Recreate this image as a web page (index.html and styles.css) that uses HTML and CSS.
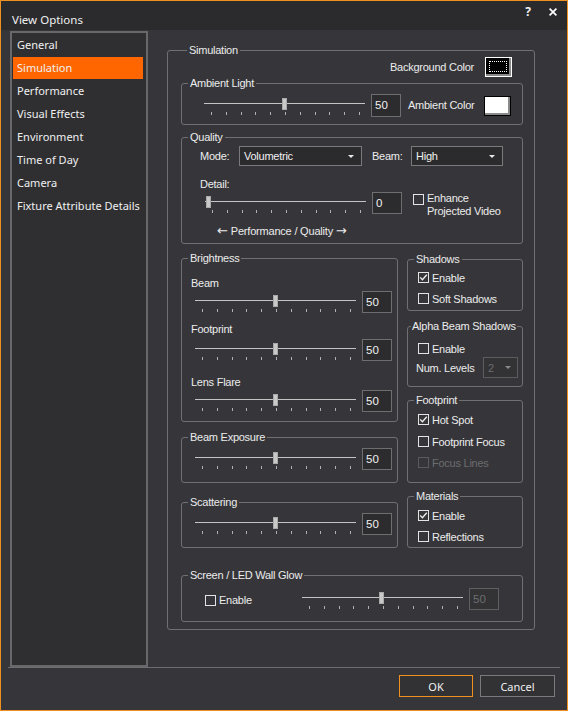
FILE: index.html
```html
<!DOCTYPE html>
<html lang="en">
<head>
<meta charset="utf-8">
<title>View Options</title>
<link rel="stylesheet" href="styles.css">
</head>
<body>
<div class="window">
  <header class="titlebar">
    <span class="title">View Options</span>
    <span class="help">?</span>
    <svg class="close" width="8" height="8" viewBox="0 0 8 8"><path d="M0.6 0.6 7.4 7.4 M7.4 0.6 0.6 7.4" stroke="#ffffff" stroke-width="1.7" fill="none"/></svg>
  </header>
  <div class="content">
    <ul class="nav">
      <li>General</li>
      <li class="active">Simulation</li>
      <li>Performance</li>
      <li>Visual Effects</li>
      <li>Environment</li>
      <li>Time of Day</li>
      <li>Camera</li>
      <li>Fixture Attribute Details</li>
    </ul>
    <main class="main">
      <fieldset class="grp sim">
        <legend>Simulation</legend>
        <div class="bg-row"><span class="lbl">Background Color</span><span class="swatch swatch-black"><span class="focus"></span></span></div>

        <fieldset class="grp ambient">
          <legend>Ambient Light</legend>
          <div class="amb-row">
            <div class="slider"><div class="track"></div><div class="thumb" style="left:78px"></div><div class="ticks"><i></i><i></i><i></i><i></i><i></i><i></i><i></i><i></i><i></i><i></i><i></i></div></div>
            <div class="val val-tall">50</div>
            <span class="amb-lbl">Ambient Color</span>
            <span class="swatch swatch-white"></span>
          </div>
        </fieldset>

        <fieldset class="grp quality">
          <legend>Quality</legend>
          <div class="q-row1">
            <span class="q-lbl">Mode:</span>
            <div class="dd dd-mode"><span>Volumetric</span><i class="caret"></i></div>
            <span class="q-lbl q-lbl2">Beam:</span>
            <div class="dd dd-beam"><span>High</span><i class="caret"></i></div>
          </div>
          <div class="q-detail">Detail:</div>
          <div class="q-row3">
            <div class="slider"><div class="track"></div><div class="thumb" style="left:1px"></div><div class="ticks"><i></i><i></i><i></i><i></i><i></i><i></i><i></i><i></i><i></i><i></i><i></i></div></div>
            <div class="val">0</div>
            <div class="enh"><span class="cb"></span><span class="enh-lbl">Enhance<br>Projected Video</span></div>
          </div>
          <div class="q-perf"><span class="arr">←</span> Performance / Quality <span class="arr">→</span></div>
        </fieldset>

        <div class="cols">
          <div class="col-left">
            <fieldset class="grp bright">
              <legend>Brightness</legend>
              <div class="b-lbl b-lbl1">Beam</div>
              <div class="srow srow1">
                <div class="slider"><div class="track"></div><div class="thumb" style="left:78px"></div><div class="ticks"><i></i><i></i><i></i><i></i><i></i><i></i><i></i><i></i><i></i><i></i><i></i></div></div>
                <div class="val">50</div>
              </div>
              <div class="b-lbl b-lbl2">Footprint</div>
              <div class="srow srow2">
                <div class="slider"><div class="track"></div><div class="thumb" style="left:78px"></div><div class="ticks"><i></i><i></i><i></i><i></i><i></i><i></i><i></i><i></i><i></i><i></i><i></i></div></div>
                <div class="val">50</div>
              </div>
              <div class="b-lbl b-lbl3">Lens Flare</div>
              <div class="srow srow1">
                <div class="slider"><div class="track"></div><div class="thumb" style="left:78px"></div><div class="ticks"><i></i><i></i><i></i><i></i><i></i><i></i><i></i><i></i><i></i><i></i><i></i></div></div>
                <div class="val">50</div>
              </div>
            </fieldset>

            <fieldset class="grp single exposure">
              <legend>Beam Exposure</legend>
              <div class="srow">
                <div class="slider"><div class="track"></div><div class="thumb" style="left:78px"></div><div class="ticks"><i></i><i></i><i></i><i></i><i></i><i></i><i></i><i></i><i></i><i></i><i></i></div></div>
                <div class="val">50</div>
              </div>
            </fieldset>

            <fieldset class="grp single scatter">
              <legend>Scattering</legend>
              <div class="srow">
                <div class="slider"><div class="track"></div><div class="thumb" style="left:78px"></div><div class="ticks"><i></i><i></i><i></i><i></i><i></i><i></i><i></i><i></i><i></i><i></i><i></i></div></div>
                <div class="val">50</div>
              </div>
            </fieldset>
          </div>

          <div class="col-right">
            <fieldset class="grp rg shadows">
              <legend>Shadows</legend>
              <div class="chk c1"><span class="cb on"><svg width="9" height="9" viewBox="0 0 9 9"><path d="M1.2 4.4 3.4 6.7 7.8 1.8" stroke="#f0f0f0" stroke-width="1.3" fill="none"/></svg></span><span>Enable</span></div>
              <div class="chk c2"><span class="cb"></span><span>Soft Shadows</span></div>
            </fieldset>

            <fieldset class="grp rg alpha">
              <legend>Alpha Beam Shadows</legend>
              <div class="chk a1"><span class="cb"></span><span>Enable</span></div>
              <div class="levels">
                <span>Num. Levels</span>
                <div class="dd dd-lv"><span>2</span><i class="caret"></i></div>
              </div>
            </fieldset>

            <fieldset class="grp rg fprint">
              <legend>Footprint</legend>
              <div class="chk f1"><span class="cb on"><svg width="9" height="9" viewBox="0 0 9 9"><path d="M1.2 4.4 3.4 6.7 7.8 1.8" stroke="#f0f0f0" stroke-width="1.3" fill="none"/></svg></span><span>Hot Spot</span></div>
              <div class="chk f2"><span class="cb"></span><span>Footprint Focus</span></div>
              <div class="chk f3 disabled"><span class="cb"></span><span>Focus Lines</span></div>
            </fieldset>

            <fieldset class="grp rg materials">
              <legend>Materials</legend>
              <div class="chk m1"><span class="cb on"><svg width="9" height="9" viewBox="0 0 9 9"><path d="M1.2 4.4 3.4 6.7 7.8 1.8" stroke="#f0f0f0" stroke-width="1.3" fill="none"/></svg></span><span>Enable</span></div>
              <div class="chk m2"><span class="cb"></span><span>Reflections</span></div>
            </fieldset>
          </div>
        </div>

        <fieldset class="grp led">
          <legend>Screen / LED Wall Glow</legend>
          <div class="led-row">
            <div class="chk led-chk"><span class="cb"></span><span>Enable</span></div>
            <div class="slider"><div class="track"></div><div class="thumb" style="left:77px"></div><div class="ticks"><i></i><i></i><i></i><i></i><i></i><i></i><i></i><i></i><i></i><i></i><i></i></div></div>
            <div class="val val-off">50</div>
          </div>
        </fieldset>
      </fieldset>
    </main>
  </div>
  <footer class="footer">
    <div class="btn primary">OK</div>
    <div class="btn btn-cancel">Cancel</div>
  </footer>
</div>
</body>
</html>
```

FILE: styles.css
```css
* { box-sizing: border-box; }
html, body { margin: 0; padding: 0; }
body { background: #36363a; }

.window {
  width: 568px;
  height: 711px;
  border: 1px solid #f0901e;
  background: #36363a;
  display: flex;
  flex-direction: column;
  font-family: "Noto Sans", "DejaVu Sans", sans-serif;
  color: #f0f0f0;
  overflow: hidden;
}

/* title bar */
.titlebar {
  height: 29px;
  flex: none;
  background: #2b2b2e;
  display: flex;
  align-items: flex-start;
}
.title { margin: 11px 0 0 11px; font-size: 11.5px; line-height: 16px; }
.help { margin: 5px 0 0 auto; font-size: 12px; font-weight: 700; line-height: 12px; }
.close { margin: 7px 10px 0 18px; display: block; flex: none; }

/* content */
.content { height: 637px; flex: none; display: flex; align-items: flex-start; }

.nav {
  list-style: none;
  margin: 1px 0 0 9px;
  padding: 1px 3px 0 1px;
  width: 138px;
  height: 636px;
  border: 2px solid #68686b;
  background: #2f2f31;
  font-size: 11px;
  flex: none;
}
.nav li { height: 22px; margin-bottom: 1px; padding-left: 4px; line-height: 22px; white-space: nowrap; }
.nav li.active { background: #ff6600; }

.main {
  margin: 13px 0 0 19px;
  font-family: "Liberation Sans", Arial, sans-serif;
  font-size: 11px;
  letter-spacing: -0.25px;
  color: #ececec;
}

/* group boxes */
.grp { margin: 0; padding: 0; border: 1px solid #707073; border-radius: 3px; min-width: 0; }
.grp > legend { margin-left: 6px; padding: 0 2px; height: 14px; line-height: 14px; white-space: nowrap; }

.sim { width: 368px; padding: 0 11px 7px 13px; }

.bg-row { height: 19px; display: flex; justify-content: flex-end; align-items: flex-start; gap: 11px; padding-right: 11px; }
.bg-row .lbl { line-height: 20px; }

.swatch { width: 27px; height: 20px; flex: none; display: block; }
.swatch-black { border: 1px solid #ffffff; background: #000; box-shadow: inset -2px -2px 0 #8a8a8a; padding: 3px 4px 4px 3px; }
.swatch-black .focus { display: block; height: 100%; border: 1px dotted #ffffff; }
.swatch-white { border: 1px solid #000; background: #fff; box-shadow: inset -2px -2px 0 #8a8a8a; margin: 2px 0 0 auto; }

/* slider */
.slider { position: relative; width: 161px; flex: none; padding-top: 9px; }
.track { height: 1px; background: #c4c4c4; }
.thumb { position: absolute; top: 4px; width: 5px; height: 12px; background: #c9c9c9; border: 1px solid #a9a9a9; }
.ticks { display: flex; justify-content: space-between; margin: 8px 5px 0 7px; height: 3px; }
.ticks i { width: 1px; height: 3px; background: #b0b0b0; }

.val {
  width: 30px; height: 22px; flex: none;
  border: 1px solid #6e6e70;
  background: #2c2c2e;
  padding-left: 3px;
  line-height: 20px;
  font-size: 11.5px;
  letter-spacing: 0;
  color: #f0f0f0;
}
.val-tall { height: 23px; line-height: 21px; }
.val-off { color: #6e6e70; border-color: #5e5e60; background: #333336; }

/* ambient */
.amb-row { display: flex; align-items: flex-start; padding: 4px 11px 7px 22px; }
.amb-row .val { margin-left: 6px; }
.amb-lbl { margin-left: 7px; line-height: 22px; }

/* quality */
.quality { margin-top: 5px; padding-bottom: 5px; }
.q-row1 { display: flex; align-items: center; padding: 2px 0 0 18px; height: 22px; }
.q-lbl { width: 39px; flex: none; }
.q-lbl2 { margin-left: 10px; }
.dd {
  height: 20px; flex: none;
  border: 1px solid #7a7a7c;
  background: #2b2b2d;
  display: flex; align-items: center;
  padding-left: 4px;
  color: #f0f0f0;
}
.caret { margin-left: auto; margin-right: 7px; width: 0; height: 0; border-left: 3px solid transparent; border-right: 3px solid transparent; border-top: 3px solid #e8e8e8; }
.dd-mode { width: 123px; }
.dd-beam { width: 92px; }
.q-detail { margin-top: 11px; padding-left: 18px; line-height: 14px; }
.q-row3 { display: flex; align-items: flex-start; margin-top: 1px; padding-left: 23px; }
.q-row3 .val { margin-left: 6px; }
.enh { display: flex; align-items: flex-start; margin-left: 11px; }
.enh .cb { margin-top: 2px; }
.enh-lbl { margin-left: 3px; line-height: 13px; }
.q-perf { margin-top: 6px; padding-left: 35px; height: 14px; line-height: 14px; letter-spacing: -0.2px; }
.arr { font-family: "DejaVu Sans", sans-serif; font-size: 13px; line-height: 0; letter-spacing: 0; }

/* checkbox */
.cb { width: 11px; height: 11px; flex: none; border: 1px solid #e4e4e4; display: flex; align-items: center; justify-content: center; }
.cb svg { display: block; }
.chk { display: flex; align-items: center; gap: 3px; height: 15px; }
.chk.disabled { color: #6c6c6e; }
.chk.disabled .cb { border-color: #5a5a5c; }

/* columns */
.cols { display: flex; align-items: flex-start; gap: 9px; margin-top: 7px; }
.col-left { width: 217px; flex: none; }
.col-right { width: 116px; flex: none; }

.bright { padding-bottom: 9px; }
.b-lbl { line-height: 14px; padding-left: 9px; }
.b-lbl1 { margin-top: 11px; }
.b-lbl2 { margin-top: 9px; }
.b-lbl3 { margin-top: 14px; }
.srow { display: flex; align-items: flex-start; padding-left: 13px; }
.srow .val { margin-left: 6px; }
.srow1 { margin-top: 1px; }
.srow2 { margin-top: 3px; }

.single { padding-bottom: 12px; }
.single .srow { margin-top: 4px; }
.exposure { margin-top: 8px; }
.scatter { margin-top: 12px; }

/* right column groups */
.rg > .chk { margin-left: 10px; }
.shadows { margin-top: 1px; padding-bottom: 4px; }
.c1 { margin-top: 4px; }
.c2 { margin-top: 6px; }

.alpha { margin-top: 8px; padding-bottom: 8px; }
.alpha > legend { margin-left: 3px; padding: 0 1px; }
.a1 { margin-top: 8px; }
.levels { display: flex; align-items: center; height: 21px; margin: 1px 4px 0 8px; }
.dd-lv { width: 35px; height: 21px; margin-left: auto; border-color: #5c5c5e; color: #6c6c6e; background: #333336; }
.dd-lv .caret { border-top-color: #8a8a8a; margin-right: 6px; }

.fprint { margin-top: 6px; padding-bottom: 12px; }
.f1 { margin-top: 5px; }
.f2 { margin-top: 7px; }
.f3 { margin-top: 6px; }

.materials { margin-top: 6px; padding-bottom: 3px; }
.m1 { margin-top: 5px; }
.m2 { margin-top: 6px; }

/* led */
.led { margin-top: 20px; padding-bottom: 11px; }
.led-row { display: flex; align-items: flex-start; margin-top: 6px; padding: 0 23px 0 23px; }
.led-chk { height: 22px; padding-top: 2px; }
.led-row .slider { margin-left: auto; }
.led-row .val { margin-left: 6px; }

/* footer */
.footer {
  flex: none;
  margin: 0 7px;
  border-top: 1px solid #6e6e70;
  display: flex;
  justify-content: flex-end;
  gap: 7px;
  padding: 7px 5px 0 0;
}
.btn {
  width: 74px; height: 22px;
  border: 1px solid #7a7a7c;
  background: #323235;
  color: #f0f0f0;
  font-size: 11px;
  display: flex; align-items: center; justify-content: center;
}
.btn.primary { border-color: #f0901e; }
.btn-cancel { width: 75px; }
```
